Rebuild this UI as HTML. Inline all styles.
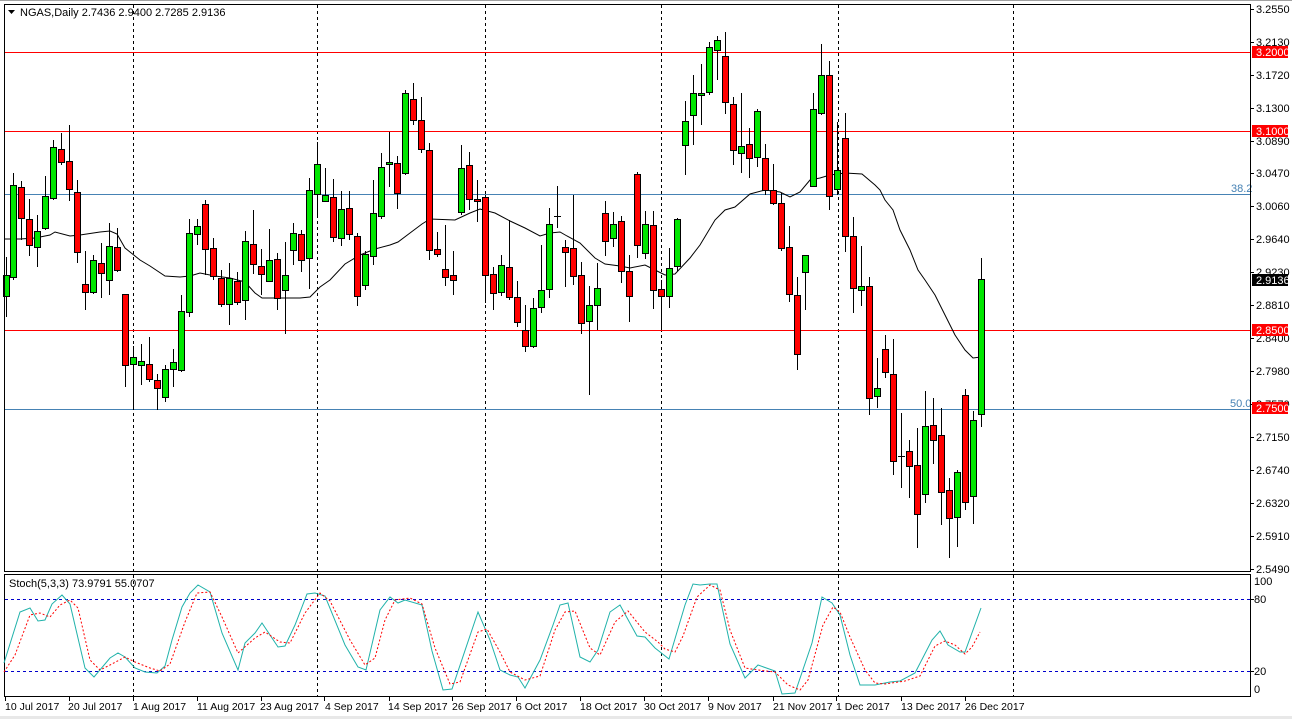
<!DOCTYPE html>
<html><head><meta charset="utf-8">
<style>
html,body{margin:0;padding:0;background:#fff;width:1292px;height:719px;overflow:hidden}
svg{display:block}
text{font-family:"Liberation Sans",sans-serif;font-size:11px;fill:#000}
.d text{font-size:10.5px}
</style></head><body>
<svg width="1292" height="719" viewBox="0 0 1292 719" xmlns="http://www.w3.org/2000/svg">
<rect x="0" y="0" width="1292" height="719" fill="#fff"/>
<rect x="0" y="0" width="1292" height="1" fill="#a0a0a0"/>
<rect x="0" y="716" width="1292" height="3" fill="#e8e8e8"/>
<g stroke="#000" stroke-width="1" stroke-dasharray="3,3" shape-rendering="crispEdges">
<path d="M133.5 5V572M317.5 5V572M485.5 5V572M661.5 5V572M838.5 5V572M1013.5 5V572"/>
<path d="M133.5 575V696M317.5 575V696M485.5 575V696M661.5 575V696M838.5 575V696M1013.5 575V696"/>
</g>
<g shape-rendering="crispEdges" stroke-width="1">
<path d="M5 52.5H1250M5 131.5H1250M5 330.5H1250" stroke="#ff0000"/>
<path d="M5 194.5H1250M5 409.5H1250" stroke="#4682b4"/>
</g>
<text x="1231" y="192" style="fill:#4682b4">38.2</text>
<text x="1230" y="407" style="fill:#4682b4">50.0</text>
<polyline fill="none" stroke="#000" stroke-width="1" points="4,239 20,239 35,238 50,235 55,232 70,236 80,235 100,232 110,231 117,234 125,248 140,260 150,266 165,276 180,277 190,276 200,273 215,276 230,278 245,282 255,293 262,298 300,298 310,297 320,287 330,280 345,264 360,255 375,249 390,245 398,242 410,233 422,224 430,219 455,220 470,213 480,209 495,213 510,221 525,228 540,236 550,233 560,232 567,236 580,243 595,258 605,264 620,266 630,268 645,265 655,270 665,275 675,274 690,258 700,245 715,220 725,210 735,207 750,194 765,190 780,192 790,197 800,192 810,180 820,178 830,175 845,173 862,174 875,185 880,190 885,200 893,210 900,230 910,250 918,270 925,280 935,295 945,315 955,335 965,350 973,358 981,357"/>
<path stroke="#000" stroke-width="1" fill="none" shape-rendering="crispEdges" d="M6.5 257V317M13.5 173V280M21.5 181V240M29.5 199V256M37.5 215V267M45.5 176V230M53.5 140V200M61.5 133V165M69.5 125V201M77.5 180V263M85.5 251V310M93.5 255V294M101.5 243V298M109.5 223V295M117.5 228V272M125.5 294V387M133.5 346V410M141.5 344V385M149.5 337V382M157.5 374V410M165.5 365V402M173.5 349V387M181.5 295V372M189.5 219V317M197.5 219V245M205.5 200V275M213.5 238V280M221.5 270V307M229.5 263V325M237.5 272V305M245.5 231V320M253.5 210V274M261.5 249V295M269.5 229V281M277.5 253V310M285.5 242V334M293.5 223V265M301.5 230V272M309.5 178V289M317.5 142V218M325.5 168V200M333.5 179V242M341.5 191V246M349.5 191V240M357.5 233V306M365.5 251V290M373.5 180V265M381.5 153V219M389.5 132V187M397.5 156V209M405.5 90V175M413.5 83V125M421.5 97V153M429.5 143V260M437.5 232V257M445.5 225V286M453.5 251V295M461.5 145V215M469.5 152V210M477.5 180V222M485.5 195V303M493.5 267V310M501.5 255V296M509.5 220V300M517.5 281V327M525.5 305V352M533.5 298V348M541.5 245V313M549.5 208V298M557.5 186V228M565.5 240V287M573.5 195V285M581.5 262V334M589.5 286V395M597.5 263V330M605.5 201V256M613.5 212V247M621.5 216V283M629.5 255V322M637.5 172V258M645.5 211V259M653.5 211V309M661.5 280V330M669.5 248V308M677.5 218V271M685.5 101V175M693.5 75V145M701.5 64V125M709.5 42V95M717.5 36V80M725.5 32V114M733.5 97V165M741.5 93V173M749.5 128V178M757.5 109V167M765.5 144V195M773.5 164V205M781.5 193V251M789.5 226V302M797.5 277V370M805.5 255V310M813.5 93V187M821.5 44V115M829.5 61V210M837.5 122V195M845.5 113V252M853.5 217V313M861.5 246V306M869.5 277V415M877.5 358V408M885.5 335V378M893.5 339V475M901.5 413V488M909.5 440V498M917.5 428V548M925.5 391V503M933.5 398V464M941.5 408V525M949.5 478V558M957.5 470V547M965.5 389V510M973.5 411V524M981.5 258V427M554 216.5H561M898 456.5H905"/>
<g stroke="#000" stroke-width="1" shape-rendering="crispEdges">
<g fill="#00e600">
<rect x="3.5" y="275.5" width="6" height="21"/><rect x="10.5" y="185.5" width="6" height="92"/><rect x="34.5" y="231.5" width="6" height="16"/><rect x="42.5" y="196.5" width="6" height="32"/><rect x="50.5" y="147.5" width="6" height="51"/><rect x="90.5" y="260.5" width="6" height="32"/><rect x="106.5" y="246.5" width="6" height="34"/><rect x="130.5" y="357.5" width="6" height="7"/><rect x="138.5" y="361.5" width="6" height="4"/><rect x="162.5" y="369.5" width="6" height="28"/><rect x="170.5" y="362.5" width="6" height="7"/><rect x="178.5" y="311.5" width="6" height="59"/><rect x="186.5" y="233.5" width="6" height="79"/><rect x="194.5" y="226.5" width="6" height="8"/><rect x="226.5" y="278.5" width="6" height="26"/><rect x="242.5" y="241.5" width="6" height="59"/><rect x="266.5" y="260.5" width="6" height="21"/><rect x="282.5" y="275.5" width="6" height="15"/><rect x="290.5" y="233.5" width="6" height="17"/><rect x="306.5" y="190.5" width="6" height="68"/><rect x="314.5" y="164.5" width="6" height="30"/><rect x="322.5" y="195.5" width="6" height="6"/><rect x="338.5" y="209.5" width="6" height="29"/><rect x="362.5" y="254.5" width="6" height="31"/><rect x="370.5" y="213.5" width="6" height="43"/><rect x="378.5" y="167.5" width="6" height="49"/><rect x="386.5" y="162.5" width="6" height="2"/><rect x="402.5" y="93.5" width="6" height="80"/><rect x="458.5" y="168.5" width="6" height="44"/><rect x="498.5" y="265.5" width="6" height="27"/><rect x="530.5" y="308.5" width="6" height="38"/><rect x="538.5" y="290.5" width="6" height="17"/><rect x="546.5" y="224.5" width="6" height="65"/><rect x="586.5" y="305.5" width="6" height="16"/><rect x="594.5" y="288.5" width="6" height="17"/><rect x="610.5" y="224.5" width="6" height="14"/><rect x="642.5" y="224.5" width="6" height="29"/><rect x="666.5" y="268.5" width="6" height="28"/><rect x="674.5" y="219.5" width="6" height="47"/><rect x="682.5" y="121.5" width="6" height="24"/><rect x="690.5" y="93.5" width="6" height="22"/><rect x="698.5" y="93.5" width="6" height="2"/><rect x="706.5" y="47.5" width="6" height="45"/><rect x="714.5" y="40.5" width="6" height="10"/><rect x="738.5" y="146.5" width="6" height="7"/><rect x="754.5" y="111.5" width="6" height="46"/><rect x="802.5" y="255.5" width="6" height="17"/><rect x="810.5" y="109.5" width="6" height="77"/><rect x="818.5" y="75.5" width="6" height="38"/><rect x="834.5" y="170.5" width="6" height="19"/><rect x="858.5" y="286.5" width="6" height="4"/><rect x="874.5" y="388.5" width="6" height="8"/><rect x="922.5" y="426.5" width="6" height="68"/><rect x="954.5" y="472.5" width="6" height="45"/><rect x="970.5" y="420.5" width="6" height="76"/><rect x="978.5" y="279.5" width="6" height="135"/>
</g>
<g fill="#ff0000">
<rect x="18.5" y="187.5" width="6" height="31"/><rect x="26.5" y="219.5" width="6" height="26"/><rect x="58.5" y="149.5" width="6" height="13"/><rect x="66.5" y="161.5" width="6" height="28"/><rect x="74.5" y="192.5" width="6" height="60"/><rect x="82.5" y="284.5" width="6" height="8"/><rect x="98.5" y="263.5" width="6" height="10"/><rect x="114.5" y="247.5" width="6" height="23"/><rect x="122.5" y="294.5" width="6" height="71"/><rect x="146.5" y="364.5" width="6" height="15"/><rect x="154.5" y="380.5" width="6" height="8"/><rect x="202.5" y="204.5" width="6" height="45"/><rect x="210.5" y="248.5" width="6" height="28"/><rect x="218.5" y="278.5" width="6" height="26"/><rect x="234.5" y="281.5" width="6" height="21"/><rect x="250.5" y="244.5" width="6" height="20"/><rect x="258.5" y="266.5" width="6" height="8"/><rect x="274.5" y="259.5" width="6" height="39"/><rect x="298.5" y="234.5" width="6" height="26"/><rect x="330.5" y="197.5" width="6" height="40"/><rect x="346.5" y="208.5" width="6" height="26"/><rect x="354.5" y="236.5" width="6" height="60"/><rect x="394.5" y="163.5" width="6" height="30"/><rect x="410.5" y="99.5" width="6" height="21"/><rect x="418.5" y="120.5" width="6" height="29"/><rect x="426.5" y="150.5" width="6" height="100"/><rect x="434.5" y="249.5" width="6" height="5"/><rect x="442.5" y="269.5" width="6" height="8"/><rect x="450.5" y="275.5" width="6" height="5"/><rect x="466.5" y="165.5" width="6" height="34"/><rect x="474.5" y="199.5" width="6" height="2"/><rect x="482.5" y="197.5" width="6" height="78"/><rect x="490.5" y="274.5" width="6" height="19"/><rect x="506.5" y="267.5" width="6" height="30"/><rect x="514.5" y="297.5" width="6" height="25"/><rect x="522.5" y="330.5" width="6" height="16"/><rect x="562.5" y="247.5" width="6" height="5"/><rect x="570.5" y="248.5" width="6" height="28"/><rect x="578.5" y="275.5" width="6" height="48"/><rect x="602.5" y="213.5" width="6" height="28"/><rect x="618.5" y="221.5" width="6" height="50"/><rect x="626.5" y="271.5" width="6" height="25"/><rect x="634.5" y="174.5" width="6" height="71"/><rect x="650.5" y="225.5" width="6" height="65"/><rect x="658.5" y="289.5" width="6" height="7"/><rect x="722.5" y="56.5" width="6" height="46"/><rect x="730.5" y="104.5" width="6" height="46"/><rect x="746.5" y="144.5" width="6" height="14"/><rect x="762.5" y="158.5" width="6" height="32"/><rect x="770.5" y="190.5" width="6" height="13"/><rect x="778.5" y="203.5" width="6" height="45"/><rect x="786.5" y="247.5" width="6" height="47"/><rect x="794.5" y="295.5" width="6" height="59"/><rect x="826.5" y="75.5" width="6" height="121"/><rect x="842.5" y="138.5" width="6" height="98"/><rect x="850.5" y="236.5" width="6" height="52"/><rect x="866.5" y="286.5" width="6" height="112"/><rect x="882.5" y="349.5" width="6" height="23"/><rect x="890.5" y="374.5" width="6" height="87"/><rect x="906.5" y="451.5" width="6" height="15"/><rect x="914.5" y="465.5" width="6" height="49"/><rect x="930.5" y="425.5" width="6" height="15"/><rect x="938.5" y="435.5" width="6" height="57"/><rect x="946.5" y="490.5" width="6" height="28"/><rect x="962.5" y="395.5" width="6" height="107"/>
</g>
</g>
<g fill="none" stroke="#000" stroke-width="1" shape-rendering="crispEdges">
<rect x="4.5" y="4.5" width="1246" height="567"/>
<rect x="4.5" y="574.5" width="1246" height="122"/>
</g>
<path d="M8 10H15L11.5 14Z" fill="#000"/>
<text x="20" y="16">NGAS,Daily  2.7436 2.9400 2.7285 2.9136</text>
<g stroke="#000" shape-rendering="crispEdges"><path d="M1250 9.5h4M1250 42.5h4M1250 75.5h4M1250 108.5h4M1250 141.5h4M1250 173.5h4M1250 206.5h4M1250 239.5h4M1250 272.5h4M1250 305.5h4M1250 338.5h4M1250 371.5h4M1250 404.5h4M1250 437.5h4M1250 470.5h4M1250 503.5h4M1250 536.5h4M1250 569.5h4M1250 599.5h4M1250 671.5h4"/></g>
<g>
<text x="1256" y="13">3.2550</text><text x="1256" y="46">3.2130</text><text x="1256" y="79">3.1720</text><text x="1256" y="112">3.1300</text><text x="1256" y="145">3.0890</text><text x="1256" y="177">3.0470</text><text x="1256" y="210">3.0060</text><text x="1256" y="243">2.9640</text><text x="1256" y="276">2.9230</text><text x="1256" y="309">2.8810</text><text x="1256" y="342">2.8400</text><text x="1256" y="375">2.7980</text><text x="1256" y="408">2.7570</text><text x="1256" y="441">2.7150</text><text x="1256" y="474">2.6740</text><text x="1256" y="507">2.6320</text><text x="1256" y="540">2.5910</text><text x="1256" y="573">2.5490</text>
</g>
<rect x="1252" y="46" width="36" height="12" fill="#ff0000"/><text x="1256" y="56" style="fill:#fff">3.2000</text>
<rect x="1252" y="125" width="36" height="12" fill="#ff0000"/><text x="1256" y="135" style="fill:#fff">3.1000</text>
<rect x="1252" y="274" width="36" height="12" fill="#000"/><text x="1256" y="284" style="fill:#fff">2.9136</text>
<rect x="1252" y="324" width="36" height="12" fill="#ff0000"/><text x="1256" y="334" style="fill:#fff">2.8500</text>
<rect x="1252" y="402" width="36" height="12" fill="#ff0000"/><text x="1256" y="412" style="fill:#fff">2.7500</text>
<text x="1254" y="585">100</text><text x="1254" y="603">80</text><text x="1254" y="675">20</text><text x="1254" y="693">0</text>
<g stroke="#0000cc" stroke-dasharray="3,3" shape-rendering="crispEdges"><path d="M5 599.5H1250M5 671.5H1250"/></g>
<text x="9" y="587">Stoch(5,3,3) 73.9791 55.0707</text>
<polyline fill="none" stroke="#20b2aa" stroke-width="1" points="4,663 20,612 30,608 38,621 45,620 52,604 62,595 70,604 85,668 94,677 110,658 118,653 125,657 135,668 145,672 157,673 165,666 172,640 182,607 190,593 198,585 210,592 222,633 238,670 245,643 255,633 262,623 278,647 285,646 295,625 307,594 315,593 325,596 345,645 358,667 366,670 380,610 390,597 398,603 405,600 422,605 432,651 443,690 452,689 478,612 490,640 500,670 510,675 518,677 525,688 540,660 553,625 560,605 568,603 580,657 590,662 598,650 610,612 620,605 637,636 645,637 655,648 669,659 685,605 693,584 700,585 710,584 717,584 730,644 745,678 758,665 775,671 782,694 795,693 812,643 822,597 832,603 840,615 850,655 860,685 875,685 890,682 900,681 915,673 932,640 940,631 948,645 960,652 965,652 981,608"/>
<polyline fill="none" stroke="#ff0000" stroke-width="1" stroke-dasharray="2,2" points="4,672 15,655 30,615 40,613 50,617 60,605 70,600 78,608 90,660 100,670 110,665 125,657 135,662 150,668 160,671 170,664 185,622 197,593 210,592 222,617 238,653 255,638 265,632 280,642 290,643 305,613 320,593 330,601 350,640 365,665 375,658 385,620 395,600 410,598 422,604 435,648 450,684 460,682 478,632 487,629 500,652 510,672 525,680 540,676 555,630 565,612 575,611 590,648 600,655 615,622 628,611 645,632 658,642 665,649 675,652 683,636 697,597 710,585 720,590 730,630 745,668 758,670 775,672 788,685 800,690 808,680 823,625 833,607 840,612 850,637 865,670 875,683 885,684 905,681 920,676 935,646 945,641 955,645 965,654 972,647 980,632"/>
<g stroke="#000" shape-rendering="crispEdges"><path d="M5.5 697v4M69.5 697v4M133.5 697v4M197.5 697v4M261.5 697v4M324.5 697v4M389.5 697v4M452.5 697v4M516.5 697v4M580.5 697v4M644.5 697v4M708.5 697v4M773.5 697v4M836.5 697v4M901.5 697v4M965.5 697v4"/></g>
<g class="d">
<text x="5" y="710">10 Jul 2017</text><text x="68" y="710">20 Jul 2017</text><text x="133" y="710">1 Aug 2017</text><text x="197" y="710">11 Aug 2017</text><text x="260" y="710">23 Aug 2017</text><text x="325" y="710">4 Sep 2017</text><text x="388" y="710">14 Sep 2017</text><text x="452" y="710">26 Sep 2017</text><text x="516" y="710">6 Oct 2017</text><text x="580" y="710">18 Oct 2017</text><text x="644" y="710">30 Oct 2017</text><text x="708" y="710">9 Nov 2017</text><text x="773" y="710">21 Nov 2017</text><text x="836" y="710">1 Dec 2017</text><text x="901" y="710">13 Dec 2017</text><text x="965" y="710">26 Dec 2017</text>
</g>
</svg>
</body></html>
